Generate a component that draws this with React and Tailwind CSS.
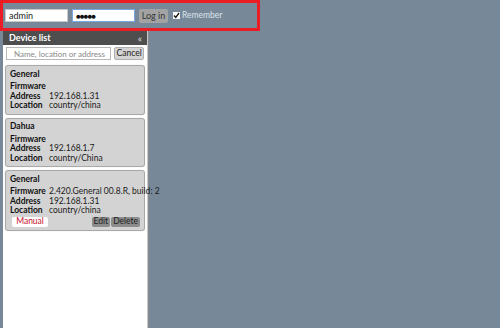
import React from "react";

const font = { fontFamily: 'Lato, "Liberation Sans", sans-serif' };

function Row({ label, value }) {
  return (
    <div className="flex h-[9.5px] items-center">
      <span className="w-[39px] shrink-0 font-bold text-[#111]">{label}</span>
      <span className="text-[#1a1a1a] whitespace-nowrap">{value}</span>
    </div>
  );
}

function Card({ title, firmware, address, location, actions }) {
  return (
    <div className="mx-[2px] mt-[3px] rounded-[3px] border border-[#a9a9a9] bg-[#d3d3d3] px-[4px] pt-[3px] pb-[3px] text-[8.5px] leading-[9px] shadow-[0_0_1px_rgba(0,0,0,0.2)]">
      <div className="h-[10px] font-bold text-[#111] flex items-center">{title}</div>
      <div className="mt-[3px]">
        <Row label="Firmware" value={firmware} />
        <Row label="Address" value={address} />
        <Row label="Location" value={location} />
      </div>
      {actions && (
        <div className="mt-[1px] flex items-center justify-between">
          <div className="ml-[2px] flex h-[10px] w-[36px] items-center justify-center rounded-[2px] bg-white text-[8.5px] text-[#c8102e]">Manual</div>
          <div className="flex gap-[1px]">
            <div className="flex h-[10px] items-center rounded-[2px] bg-[#8c8c8c] px-[2px] text-[#222]">Edit</div>
            <div className="flex h-[10px] items-center rounded-[2px] bg-[#8c8c8c] px-[2px] text-[#222]">Delete</div>
          </div>
        </div>
      )}
    </div>
  );
}

export default function App() {
  return (
    <div className="flex h-[328px] w-[500px] flex-col overflow-hidden bg-[#778899]" style={font}>
      <div className="flex h-[31px] w-[260px] shrink-0 items-center border-[3px] border-[#ec1c24] pl-[2px]">
        <div className="flex h-[13px] w-[63px] items-center border border-[#c8c8c8] bg-white pl-[3px] text-[9px] text-[#222]">admin</div>
        <div className="ml-[4px] flex h-[13px] w-[63px] items-center border border-[#7aa7e0] bg-white pl-[3px] text-[8px] tracking-[-1px] text-[#111]">●●●●●</div>
        <div className="ml-[4px] flex h-[14px] w-[29px] items-center justify-center rounded-[2px] bg-[#a3a3a3] text-[9px] text-[#333]">Log in</div>
        <div className="ml-[5px] flex h-[7px] w-[7px] items-center justify-center bg-white">
          <svg width="7" height="7" viewBox="0 0 7 7"><path d="M1 3.5 L2.8 5.5 L6 1" stroke="#111" strokeWidth="1.3" fill="none" /></svg>
        </div>
        <span className="ml-[2px] text-[8.5px] text-[#dde3ea]">Remember</span>
      </div>
      <div className="flex min-h-0 flex-1">
        <div className="ml-[3px] flex w-[145px] flex-col bg-white border-r border-[#c8c8c8] shadow-[1px_0_0_#8a8a8a]">
          <div className="flex h-[14px] shrink-0 items-center justify-between bg-[#4e4e4e] pl-[6px] pr-[5px]">
            <span className="text-[9px] font-bold text-white">Device list</span>
            <span className="text-[10px] leading-none text-[#dcdcdc]">«</span>
          </div>
          <div className="mt-[2px] flex items-center px-[3px]">
            <div className="flex h-[13px] w-[106px] items-center border border-[#b8b8b8] bg-white pl-[7px] text-[8px] text-[#888] whitespace-nowrap overflow-hidden">Name, location or address</div>
            <div className="ml-[3px] flex h-[13px] w-[30px] items-center justify-center rounded-[2px] border border-[#b0b0b0] bg-[#d4d4d4] text-[8.5px] text-[#222]">Cancel</div>
          </div>
          <div className="mt-[2px]">
            <Card title="General" firmware="" address="192.168.1.31" location="country/china" />
            <Card title="Dahua" firmware="" address="192.168.1.7" location="country/China" />
            <Card title="General" firmware="2.420.General 00.8.R, build: 2" address="192.168.1.31" location="country/china" actions />
          </div>
        </div>
      </div>
    </div>
  );
}
